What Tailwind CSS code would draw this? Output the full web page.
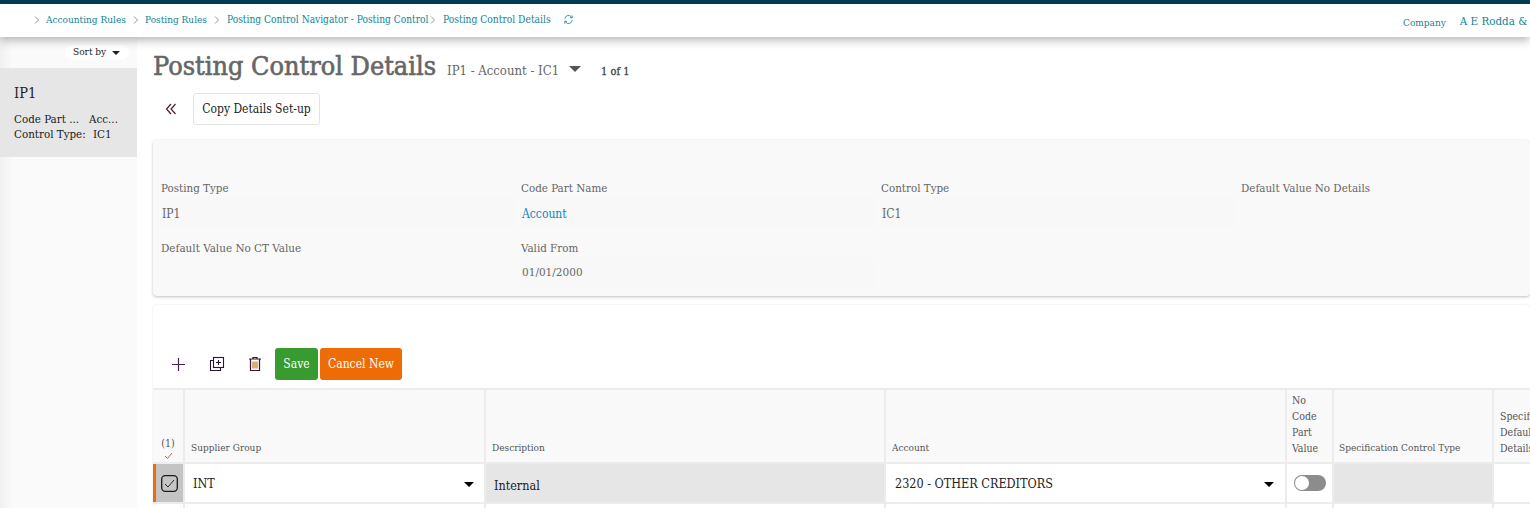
<!DOCTYPE html>
<html lang="en">
<head>
<meta charset="UTF-8">
<title>Posting Control Details</title>
<script src="https://cdn.jsdelivr.net/npm/@tailwindcss/browser@4"></script>
</head>
<body class="font-['DejaVu_Serif_Condensed','DejaVu_Serif',serif] [font-stretch:condensed] bg-white text-[12px] text-[#222]">
<div class="w-[1530px] h-[508px] overflow-hidden flex flex-col">
    <div class="h-[4px] shrink-0 bg-[#013f58]"></div>

    <!-- breadcrumb -->
    <header class="relative z-10 h-[33px] shrink-0 bg-white pb-[2px] shadow-[0_3px_9px_rgba(0,0,0,0.3)] flex items-center text-[10px] text-[#0f8496] whitespace-nowrap">
        <svg class="ml-[34px]" width="5" height="8" viewBox="0 0 5 8" fill="none" stroke="#777" stroke-width="0.800"><path d="M1 .5 4.500 4 1 7.500"/></svg>
        <span class="ml-[7px] w-[81px]">Accounting Rules</span>
        <svg class="ml-[6px]" width="5" height="8" viewBox="0 0 5 8" fill="none" stroke="#777" stroke-width="0.800"><path d="M1 .5 4.500 4 1 7.500"/></svg>
        <span class="ml-[7px] w-[63px]">Posting Rules</span>
        <svg class="ml-[6px]" width="5" height="8" viewBox="0 0 5 8" fill="none" stroke="#777" stroke-width="0.800"><path d="M1 .5 4.500 4 1 7.500"/></svg>
        <span class="ml-[8px] w-[202px] text-[10.150px]">Posting Control Navigator - Posting Control</span>
        <svg class="ml-[1px]" width="5" height="8" viewBox="0 0 5 8" fill="none" stroke="#777" stroke-width="0.800"><path d="M1 .5 4.500 4 1 7.500"/></svg>
        <span class="ml-[8px] w-[108px] text-[10.200px]">Posting Control Details</span>
        <svg class="ml-[12px]" width="11" height="11" viewBox="0 0 12 12" fill="none" stroke="#0f8496" stroke-width="0.900"><path d="M2 5a4 4 0 0 1 7-2l1 1M10 7a4 4 0 0 1-7 2L2 8"/><path d="M10 1.500V4H7.500M2 10.500V8h2.500"/></svg>
        <div class="ml-auto flex gap-[14px] w-[127px] shrink-0 pt-[5px] items-center"><span class="text-[10px]">Company</span><span class="text-[11.500px]">A E Rodda &amp;</span></div>
    </header>

    <div class="flex flex-1 min-h-0">
        <!-- list side -->
        <aside class="w-[137px] shrink-0 bg-linear-to-r from-[#f0f0f0] to-[#fafafa] to-[12px]">
            <div class="h-[31px] flex justify-end items-center pr-[8px]">
                <div class="h-[15px] w-[64px] pl-[8px] pb-[2px] rounded-full bg-white flex items-center gap-[6px] text-[10px]">Sort by <span class="mt-[2px] w-0 h-0 border-x-[4px] border-x-transparent border-t-[4px] border-t-[#222]"></span></div>
            </div>
            <div class="h-[89px] bg-[#e6e6e6] pl-[14px] pt-[17px]">
                <div class="text-[14.500px] leading-[17px]">IP1</div>
                <div class="mt-[10px] leading-[15px] text-[11.500px]">
                    <div class="flex"><span class="w-[75px]">Code Part ...</span><span>Acc...</span></div>
                    <div class="flex"><span class="w-[79px]">Control Type:</span><span>IC1</span></div>
                </div>
            </div>
        </aside>

        <!-- content -->
        <main class="flex-1 min-w-0 pl-[16px]">
            <div class="h-[47px] flex items-end whitespace-nowrap">
                <h1 class="text-[26.800px] leading-[34px] pb-px font-normal [-webkit-text-stroke:0.6px_#666] text-[#666]">Posting Control Details</h1>
                <span class="ml-[11px] mb-[4px] text-[13px] text-[#666]">IP1 - Account - IC1</span>
                <span class="ml-[10px] mb-[12px] w-0 h-0 border-x-[6px] border-x-transparent border-t-[6px] border-t-[#555]"></span>
                <span class="ml-[20px] mb-[4px] text-[11px] font-medium [-webkit-text-stroke:0.3px_#444] text-[#444]">1 of 1</span>
            </div>
            <div class="h-[41px] mt-[4px] flex items-center">
                <svg class="ml-[12px]" width="12" height="12" viewBox="0 0 12 12" fill="none" stroke="#4a1c2e" stroke-width="1.200"><path d="M6 1 1.500 6 6 11M10.500 1 6 6l4.500 5"/></svg>
                <button class="ml-[16px] h-[32px] w-[127px] border border-[#e4e4e4] rounded-[3px] bg-white text-[12px] text-[#222]">Copy Details Set-up</button>
            </div>

            <!-- details card -->
            <section class="mt-[11px] h-[156px] bg-[#f9f9f9] rounded-[4px] shadow-[0_1px_3px_rgba(0,0,0,0.25)] pl-[8px] pt-[41px] text-[#666]">
                <div class="grid grid-cols-[360px_360px_360px_360px] auto-rows-[60px]">
                    <div><div class="leading-[14px] text-[11.500px]">Posting Type</div><div class="mt-[3px] h-[31px] w-[353px] flex items-center pl-px bg-[#f8f8f8] text-[12px]">IP1</div></div>
                    <div><div class="leading-[14px] text-[11.500px]">Code Part Name</div><div class="mt-[3px] h-[31px] w-[353px] flex items-center pl-px bg-[#f8f8f8] text-[12px] text-[#0a88c0]">Account</div></div>
                    <div><div class="leading-[14px] text-[11.500px]">Control Type</div><div class="mt-[3px] h-[31px] w-[353px] flex items-center pl-px bg-[#f8f8f8] text-[12px]">IC1</div></div>
                    <div><div class="leading-[14px] text-[11.500px]">Default Value No Details</div></div>
                    <div><div class="leading-[14px] text-[11.600px]">Default Value No CT Value</div></div>
                    <div><div class="leading-[14px] text-[11.500px]">Valid From</div><div class="mt-[2px] h-[31px] w-[353px] flex items-center pl-px bg-[#f8f8f8] text-[11.700px]">01/01/2000</div></div>
                </div>
            </section>

            <!-- lines card -->
            <section class="mt-[9px] h-[300px] bg-white rounded-t-[4px] shadow-[0_0_2px_rgba(0,0,0,0.12)]">
                <div class="h-[83px] pt-[43px] flex items-start">
                    <div class="w-[122px] h-[32px] flex items-center">
                        <svg class="ml-[18px]" width="15" height="15" viewBox="0 0 15 15" fill="none" stroke="#4a1e4e" stroke-width="1.200"><path d="M7.500 1v13M1 7.500h13"/></svg>
                        <svg class="ml-[23px]" width="16" height="16" viewBox="0 0 16 16" fill="none" stroke="#2c1233" stroke-width="1.100"><rect x="4.500" y="1.500" width="10" height="10"/><path d="M4.500 4.500h-3v10h10v-3M9.500 4v5M7 6.500h5"/></svg>
                        <svg class="ml-[23px]" width="14" height="16" viewBox="0 0 14 16" fill="none" stroke="#3a1530" stroke-width="1.200"><path d="M1 3h12M5 3V1.500h4V3M2.500 3v11.500h9V3"/><path d="M5 5.500v7M7 5.500v7M9 5.500v7" stroke="#c8862e" stroke-width="1.300"/></svg>
                    </div>
                    <button class="h-[32px] w-[43px] rounded-[3px] bg-[#379b30] text-white text-[12px] font-medium">Save</button>
                    <button class="ml-[2px] h-[32px] w-[82px] rounded-[3px] bg-[#ee6c05] text-white text-[12px] font-medium whitespace-nowrap">Cancel New</button>
                </div>

                <!-- header row -->
                <div class="grid grid-cols-[32px_301px_400px_401px_47px_160px_60px] w-[1401px]">
                    <div class="h-[76px] bg-[#f9f9f9] border-y-2 border-[#ececec] border-r-2 flex flex-col items-center justify-end pb-[2px] text-[10.500px] text-[#555]"><span>(1)</span><svg width="9" height="8" viewBox="0 0 9 8" fill="none" stroke="#c2683a"><path d="M1 4l2.500 2.500L8 1"/></svg></div>
                    <div class="h-[76px] bg-[#f9f9f9] border-y-2 border-[#ececec] border-r-2 flex items-end px-[6px] pb-[7px] text-[10px] text-[#555]">Supplier Group</div>
                    <div class="h-[76px] bg-[#f9f9f9] border-y-2 border-[#ececec] border-r-2 flex items-end px-[6px] pb-[7px] text-[10px] text-[#555]">Description</div>
                    <div class="h-[76px] bg-[#f9f9f9] border-y-2 border-[#ececec] border-r-2 flex items-end px-[6px] pb-[7px] text-[10px] text-[#555]">Account</div>
                    <div class="h-[76px] bg-[#f9f9f9] border-y-2 border-[#ececec] border-r-2 flex items-end px-[5px] pb-[6px] text-[10.500px] leading-[16px] text-[#555]">No<br>Code<br>Part<br>Value</div>
                    <div class="h-[76px] bg-[#f9f9f9] border-y-2 border-[#ececec] border-r-2 flex items-end px-[5px] pb-[7px] text-[10px] text-[#555] whitespace-nowrap">Specification Control Type</div>
                    <div class="h-[76px] bg-[#f9f9f9] border-y-2 border-[#ececec] flex items-end px-[6px] pb-[6px] text-[10.500px] leading-[16px] text-[#555]">Specific<br>Default<br>Details</div>
                </div>

                <!-- data row -->
                <div class="grid grid-cols-[32px_301px_400px_401px_47px_160px_60px] w-[1401px] h-[40px] border-b-2 border-[#ececec]">
                    <div class="border-l-[3px] border-[#ee6c05] bg-[#c4c4c4] border-r-2 border-r-[#ececec] flex items-center justify-center">
                        <svg width="17" height="17" viewBox="0 0 17 17" fill="none" stroke="#1a1a1a"><rect x="0.700" y="0.700" width="15.600" height="15.600" rx="3.500" stroke-width="1.300"/><path d="M4 9l3 3 6-7" stroke-width="0.900"/></svg>
                    </div>
                    <div class="border-r-2 border-[#ececec] flex items-center pl-[8px] pr-[10px] pt-[2px] text-[12.500px]"><span class="flex-1">INT</span><span class="w-0 h-0 border-x-[5px] border-x-transparent border-t-[5px] border-t-black"></span></div>
                    <div class="bg-[#e6e6e6] border-r-2 border-[#ececec] flex items-center pl-[8px] pt-[6px] text-[12.500px]">Internal</div>
                    <div class="border-r-2 border-[#ececec] flex items-center pl-[9px] pr-[11px] pt-[2px] text-[12.500px]"><span class="flex-1">2320 - OTHER CREDITORS</span><span class="w-0 h-0 border-x-[5px] border-x-transparent border-t-[5px] border-t-black"></span></div>
                    <div class="border-r-2 border-[#ececec] flex items-center pl-[7px]"><div class="w-[32px] h-[16px] rounded-full bg-[#8c8c8c] p-px"><div class="w-[14px] h-[14px] rounded-full bg-white"></div></div></div>
                    <div class="bg-[#e6e6e6] border-r-2 border-[#ececec]"></div>
                    <div></div>
                </div>
                <div class="grid grid-cols-[32px_301px_400px_401px_47px_160px_60px] w-[1401px] h-[10px]">
                    <div class="border-r-2 border-[#ececec]"></div><div class="border-r-2 border-[#ececec]"></div><div class="border-r-2 border-[#ececec]"></div><div class="border-r-2 border-[#ececec]"></div><div class="border-r-2 border-[#ececec]"></div><div class="border-r-2 border-[#ececec]"></div><div></div>
                </div>
            </section>
        </main>
    </div>
</div>
</body>
</html>
